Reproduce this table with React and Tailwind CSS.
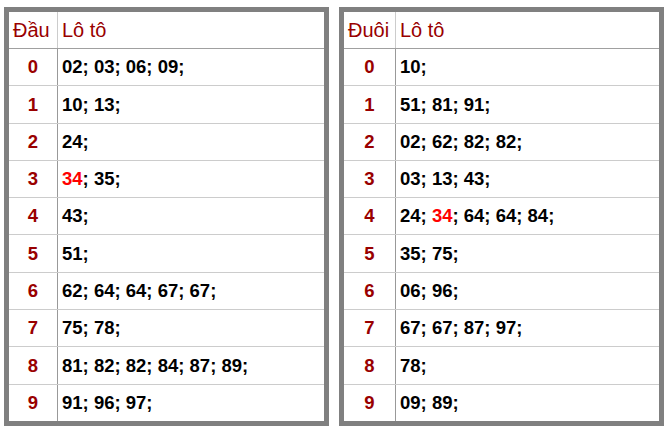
import React from "react";

const left = [
  ["0", ["02", "03", "06", "09"]],
  ["1", ["10", "13"]],
  ["2", ["24"]],
  ["3", ["34", "35"]],
  ["4", ["43"]],
  ["5", ["51"]],
  ["6", ["62", "64", "64", "67", "67"]],
  ["7", ["75", "78"]],
  ["8", ["81", "82", "82", "84", "87", "89"]],
  ["9", ["91", "96", "97"]],
];
const right = [
  ["0", ["10"]],
  ["1", ["51", "81", "91"]],
  ["2", ["02", "62", "82", "82"]],
  ["3", ["03", "13", "43"]],
  ["4", ["24", "34", "64", "64", "84"]],
  ["5", ["35", "75"]],
  ["6", ["06", "96"]],
  ["7", ["67", "67", "87", "97"]],
  ["8", ["78"]],
  ["9", ["09", "89"]],
];

function Table({ head, rows, colW }) {
  return (
    <div className="w-[325px] h-[419px] border-[5px] border-[#808080] bg-white flex flex-col">
      <div className="h-[37px] flex border-b border-[#a0a0a0] shrink-0">
        <div className={`${colW} border-r border-[#cccccc] flex items-center pl-[4px] text-[20px] text-[#990000]`}>
          {head}
        </div>
        <div className="flex-1 flex items-center pl-[4px] text-[20px] text-[#990000]">Lô tô</div>
      </div>
      {rows.map(([d, vals], i) => (
        <div key={d} className={`flex-1 flex ${i < rows.length - 1 ? "border-b border-[#cccccc]" : ""}`}>
          <div className={`${colW} border-r border-[#999999] flex items-center justify-center font-bold text-[18.5px] text-[#990000]`}>
            {d}
          </div>
          <div className="flex-1 flex items-center pl-[4px] font-bold text-[18.5px] text-black whitespace-pre">
            {vals.map((v, j) => (
              <span key={j}>
                <span className={v === "34" ? "text-[#ff0000]" : ""}>{v}</span>
                {j < vals.length - 1 ? "; " : ";"}
              </span>
            ))}
          </div>
        </div>
      ))}
    </div>
  );
}

export default function App() {
  return (
    <div className="w-[667px] h-[431px] bg-white pt-[7px] pl-[4px] flex gap-[10px]" style={{ fontFamily: '"Liberation Sans", Arial, sans-serif' }}>
      <Table head="Đầu" rows={left} colW="w-[49px]" />
      <Table head="Đuôi" rows={right} colW="w-[52px]" />
    </div>
  );
}
